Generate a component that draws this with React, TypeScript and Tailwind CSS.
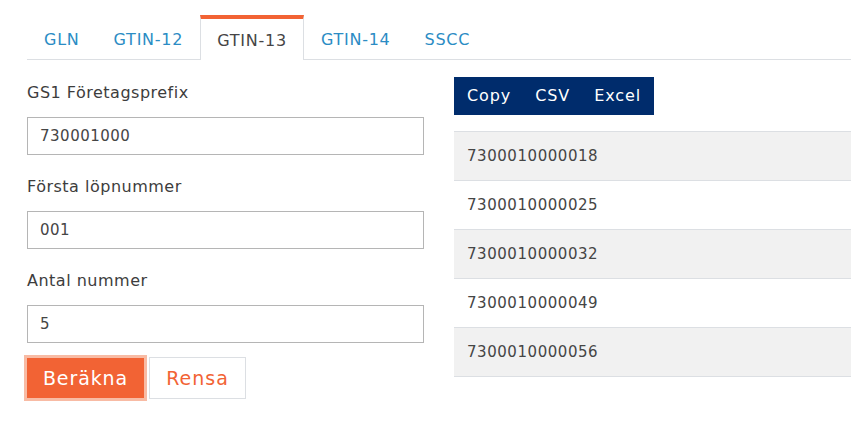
const tabs = ["GLN", "GTIN-12", "GTIN-13", "GTIN-14", "SSCC"];
const results = [
  "7300010000018",
  "7300010000025",
  "7300010000032",
  "7300010000049",
  "7300010000056",
];

function Field({ label, value }: { label: string; value: string }) {
  return (
    <div className="flex flex-col">
      <label className="h-[22px] text-[16px] leading-[22px] tracking-[0.5px] text-[#3d3d3d]">
        {label}
      </label>
      <input
        readOnly
        value={value}
        className="mt-[13px] h-[38px] w-full border border-[#b5b5b5] bg-white px-[12px] text-[15px] tracking-[0.5px] text-[#454545] outline-none"
      />
    </div>
  );
}

export default function App() {
  return (
    <div
      className="min-h-[434px] bg-white pl-[27px] pr-[9px] pt-[15px]"
      style={{ fontFamily: '"DejaVu Sans", "Liberation Sans", sans-serif' }}
    >
      {/* Tabs */}
      <div className="flex h-[45px] border-b border-[#dcdfe3]">
        {tabs.map((tab) => {
          const active = tab === "GTIN-13";
          return (
            <div
              key={tab}
              className={
                active
                  ? "-mb-px flex items-center border-x border-t-4 border-[#dcdfe3] border-t-[#f26334] bg-white px-[16px] pt-[2px] text-[16px] tracking-[0.75px] text-[#454545]"
                  : "flex items-center border-x border-t-4 border-transparent px-[16px] pt-[2px] text-[16px] tracking-[0.75px] text-[#2b8cc4]"
              }
            >
              {tab}
            </div>
          );
        })}
      </div>

      <div className="grid grid-cols-2 gap-[30px]">
        {/* Form */}
        <div className="flex flex-col gap-[21px] pt-[22px]">
          <Field label="GS1 Företagsprefix" value="730001000" />
          <Field label="Första löpnummer" value="001" />
          <div className="flex flex-col">
            <Field label="Antal nummer" value="5" />
            <div className="mt-[14px] flex items-center gap-[5px]">
              <button className="h-[40px] w-[117px] rounded-none bg-[#f26334] text-[19px] tracking-[0.9px] text-white ring-[3px] ring-[#f8bba4]">
                Beräkna
              </button>
              <button className="h-[42px] w-[97px] border border-[#dcdfe3] bg-white text-[19px] tracking-[1px] text-[#f26334]">
                Rensa
              </button>
            </div>
          </div>
        </div>

        {/* Results */}
        <div className="pt-[17px]">
          <div className="inline-flex h-[38px] items-center bg-[#002c6c] px-[1px] text-[16px] tracking-[0.9px] text-white">
            <span className="px-[12px]">Copy</span>
            <span className="px-[12px]">CSV</span>
            <span className="px-[12px]">Excel</span>
          </div>
          <div className="mt-[16px] border-b border-[#dcdfe3]">
            {results.map((n, i) => (
              <div
                key={n}
                className={
                  "flex h-[49px] items-center border-t border-[#dcdfe3] px-[13px] text-[15px] tracking-[0.55px] text-[#454545] " +
                  (i % 2 === 0 ? "bg-[#f1f1f1]" : "bg-white")
                }
              >
                {n}
              </div>
            ))}
          </div>
        </div>
      </div>
    </div>
  );
}
